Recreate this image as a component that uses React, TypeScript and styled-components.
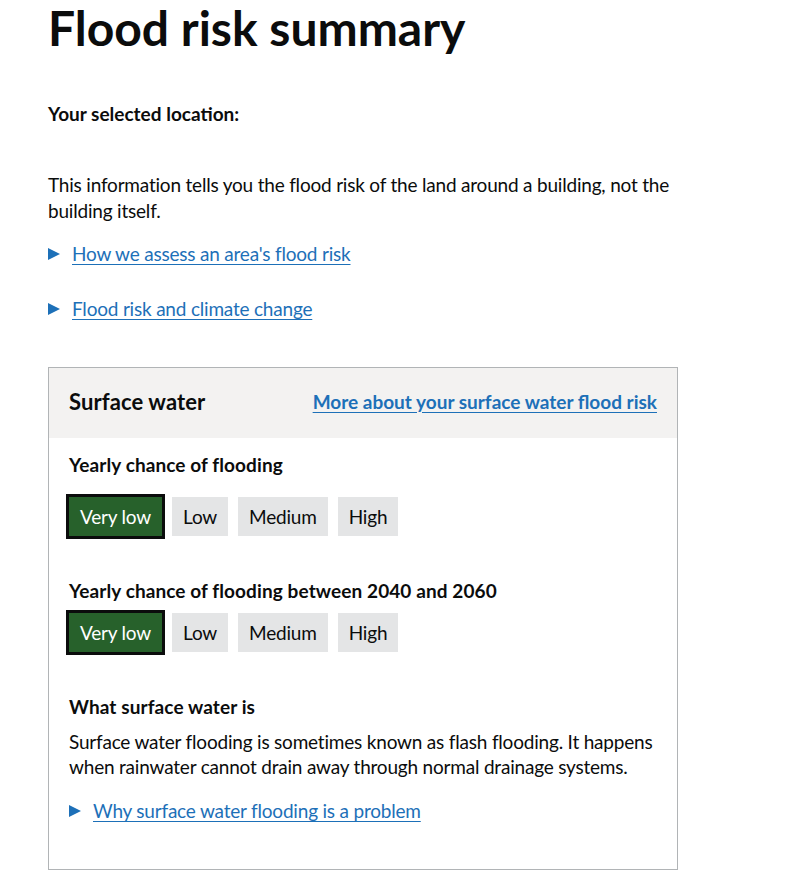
import React from "react";
import styled, { createGlobalStyle } from "styled-components";

const GlobalStyle = createGlobalStyle`
  body {
    margin: 0;
    background: #ffffff;
    color: #0b0c0c;
    font-family: "Lato", "Noto Sans", sans-serif;
    letter-spacing: -0.2px;
  }
`;

const Page = styled.main`
  padding: 0 48px;
  width: 640px;
`;

const Heading = styled.h1`
  margin: 0 0 45px;
  font-size: 48px;
  line-height: 56px;
  font-weight: 700;
  letter-spacing: 0;
`;

const Body = styled.p<{ $bold?: boolean }>`
  margin: 0 0 ${(p) => (p.$bold ? "19px" : "17px")};
  font-size: 19px;
  line-height: 26px;
  font-weight: ${(p) => (p.$bold ? 700 : 400)};
  letter-spacing: ${(p) => (p.$bold ? "0" : "-0.2px")};
`;

const Blank = styled.span`
  display: block;
  height: 26px;
`;

const Details = styled.div`
  display: flex;
  align-items: center;
  gap: 12px;
  margin-bottom: 29px;
  font-size: 19px;
  line-height: 26px;
`;

const Arrow = styled.span`
  width: 0;
  height: 0;
  border-style: solid;
  border-width: 6.5px 0 6.5px 12px;
  border-color: transparent transparent transparent #1d70b8;
`;

const Link = styled.a<{ $bold?: boolean }>`
  color: #1d70b8;
  text-decoration: underline;
  text-underline-offset: 3px;
  text-decoration-thickness: 1px;
  font-weight: ${(p) => (p.$bold ? 700 : 400)};
  letter-spacing: ${(p) => (p.$bold ? "0" : "-0.2px")};
  cursor: pointer;
`;

const Card = styled.section`
  margin-top: 45px;
  border: 1px solid #b1b4b6;
  width: 628px;
`;

const CardHeader = styled.header`
  display: flex;
  align-items: center;
  justify-content: space-between;
  height: 70px;
  padding: 0 20px;
  background: #f3f2f1;
`;

const CardTitle = styled.h2`
  margin: 0 0 4px;
  font-size: 22px;
  font-weight: 700;
  letter-spacing: 0.1px;
`;

const HeaderLink = styled(Link)`
  font-size: 19px;
  margin-bottom: 4px;
`;

const CardBody = styled.div`
  padding: 14px 17px 45px;
`;

const SubHeading = styled.h3<{ $gap: number }>`
  margin: 0 0 ${(p) => p.$gap}px 3px;
  font-size: 19px;
  line-height: 26px;
  font-weight: 700;
  letter-spacing: 0.1px;
`;

const Levels = styled.div`
  display: flex;
  align-items: center;
  gap: 10px;
  margin-bottom: 39px;
`;

const Level = styled.span<{ $active?: boolean }>`
  display: inline-flex;
  align-items: center;
  box-sizing: border-box;
  height: ${(p) => (p.$active ? "45px" : "39px")};
  padding: 0 11px;
  margin-right: ${(p) => (p.$active ? "-3px" : "0")};
  font-size: 19px;
  background: ${(p) => (p.$active ? "#27612b" : "#e4e5e6")};
  color: ${(p) => (p.$active ? "#ffffff" : "#0b0c0c")};
  border: ${(p) => (p.$active ? "3px solid #0b0c0c" : "none")};
`;

const Text = styled.p`
  margin: 0 0 19px 3px;
  font-size: 19px;
  line-height: 25px;
`;

const InnerDetails = styled(Details)`
  margin: 0 0 0 3px;
`;

const levels = ["Very low", "Low", "Medium", "High"];

function LevelRow({ current }: { current: string }) {
  return (
    <Levels>
      {levels.map((l) => (
        <Level key={l} $active={l === current}>
          {l}
        </Level>
      ))}
    </Levels>
  );
}

export default function App() {
  return (
    <>
      <GlobalStyle />
      <Page>
        <Heading>Flood risk summary</Heading>
        <Body $bold>
          Your selected location:
          <Blank />
        </Body>
        <Body>
          This information tells you the flood risk of the land around a
          building, not the building itself.
        </Body>
        <Details>
          <Arrow />
          <Link>How we assess an area's flood risk</Link>
        </Details>
        <Details>
          <Arrow />
          <Link>Flood risk and climate change</Link>
        </Details>
        <Card>
          <CardHeader>
            <CardTitle>Surface water</CardTitle>
            <HeaderLink $bold>More about your surface water flood risk</HeaderLink>
          </CardHeader>
          <CardBody>
            <SubHeading $gap={16}>Yearly chance of flooding</SubHeading>
            <LevelRow current="Very low" />
            <SubHeading $gap={6}>Yearly chance of flooding between 2040 and 2060</SubHeading>
            <LevelRow current="Very low" />
            <SubHeading $gap={9}>What surface water is</SubHeading>
            <Text>
              Surface water flooding is sometimes known as flash flooding. It
              happens when rainwater cannot drain away through normal drainage
              systems.
            </Text>
            <InnerDetails>
              <Arrow />
              <Link>Why surface water flooding is a problem</Link>
            </InnerDetails>
          </CardBody>
        </Card>
      </Page>
    </>
  );
}
